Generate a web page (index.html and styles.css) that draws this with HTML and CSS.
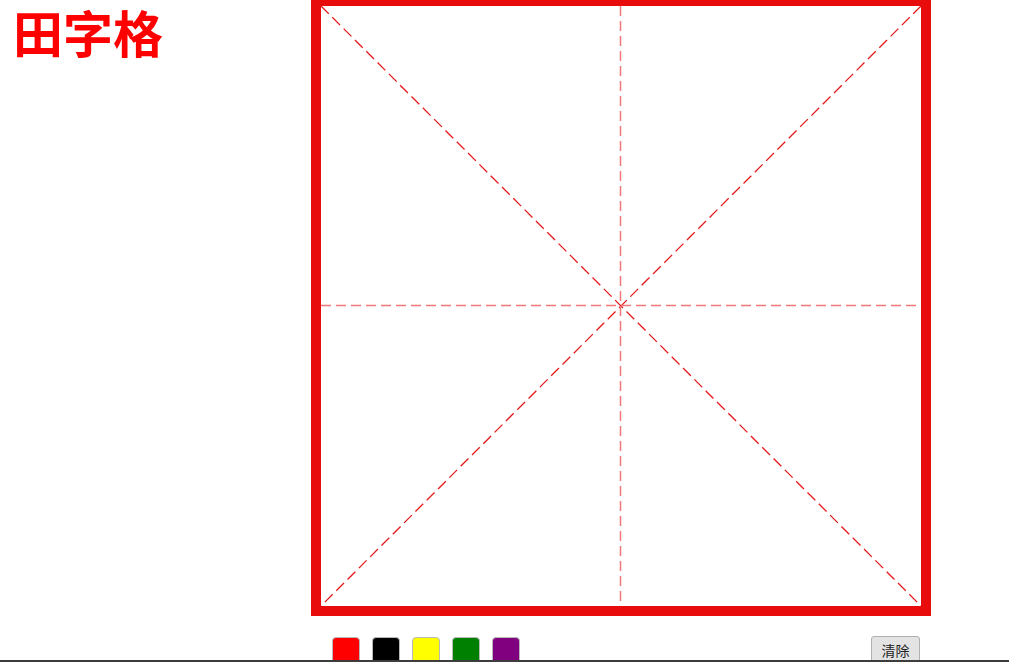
FILE: index.html
```html
<!DOCTYPE html>
<html lang="zh">
<head>
<meta charset="utf-8">
<title>田字格</title>
<link rel="stylesheet" href="styles.css">
</head>
<body>
<div class="page">
  <div class="sidebar">
    <h1 class="title">田字格</h1>
  </div>
  <div class="main">
    <div class="board">
      <svg class="guides" viewBox="0 0 600 600" width="600" height="600" xmlns="http://www.w3.org/2000/svg">
        <line x1="0" y1="0" x2="600" y2="600" class="diag"/>
        <line x1="600" y1="0" x2="0" y2="600" class="diag"/>
        <line x1="299.5" y1="0" x2="299.5" y2="600" class="axis"/>
        <line x1="0" y1="299.5" x2="600" y2="299.5" class="axis"/>
      </svg>
    </div>
    <div class="controls">
      <div class="swatches">
        <button class="swatch swatch-red" aria-label="red"></button>
        <button class="swatch swatch-black" aria-label="black"></button>
        <button class="swatch swatch-yellow" aria-label="yellow"></button>
        <button class="swatch swatch-green" aria-label="green"></button>
        <button class="swatch swatch-purple" aria-label="purple"></button>
      </div>
      <button class="clear">清除</button>
    </div>
  </div>
</div>
<div class="frame-edge"></div>
</body>
</html>
```
FILE: styles.css
```css
html, body {
  margin: 0;
  padding: 0;
  background: #ffffff;
  height: 662px;
  overflow: hidden;
}
body {
  font-family: "Noto Sans CJK SC", "Noto Sans", sans-serif;
}
.page {
  display: flex;
  align-items: flex-start;
}
.sidebar {
  width: 311px;
  flex: none;
  padding-top: 1px;
}
.title {
  margin: 0;
  padding: 0 0 4px 13px;
  font-size: 50px;
  line-height: 60px;
  font-weight: 700;
  color: #ff0000;
  font-family: "Noto Sans CJK SC", sans-serif;
}
.main {
  display: flex;
  flex-direction: column;
  width: 620px;
}
.board {
  width: 600px;
  height: 600px;
  border: 10px solid #e80c0c;
  border-top-width: 6px;
  background: #fff;
}
.guides {
  display: block;
}
.diag {
  stroke: #e41a1a;
  stroke-width: 1.3;
  stroke-dasharray: 11 5;
}
.axis {
  stroke: #f07878;
  stroke-width: 1.5;
  stroke-dasharray: 10 5;
}
.controls {
  display: flex;
  justify-content: space-between;
  align-items: flex-start;
  padding: 20px 11px 0 21px;
}
.swatches {
  display: flex;
  gap: 12px;
  margin-top: 1px;
}
.swatch {
  width: 28px;
  height: 30px;
  padding: 0;
  border: 1px solid #b8b8b8;
  border-radius: 4px;
}
.swatch-red { background: #ff0000; }
.swatch-black { background: #000000; }
.swatch-yellow { background: #ffff00; }
.swatch-green { background: #008000; }
.swatch-purple { background: #800080; }
.clear {
  width: 49px;
  height: 29px;
  padding: 0;
  border: 1px solid #b0b0b0;
  border-radius: 3px;
  background: #e3e3e3;
  color: #222;
  font-family: "Noto Sans CJK SC", sans-serif;
  font-size: 14px;
  line-height: 27px;
}
.frame-edge {
  position: fixed;
  left: 0;
  right: 0;
  bottom: 0;
  height: 2px;
  background: #3c3c3c;
}
```
